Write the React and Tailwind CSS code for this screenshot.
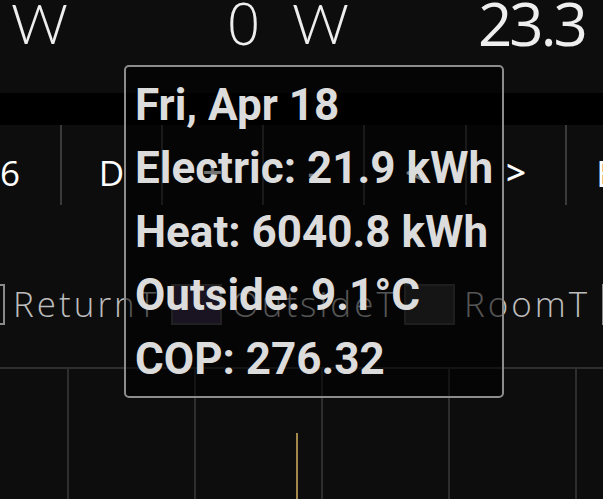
import React from 'react';

const buttons = [
    { label: '+', width: 'w-[101px]' },
    { label: '-', width: 'w-[101px]' },
    { label: '<', width: 'w-[102px]' },
    { label: '>', width: 'w-[100px]' },
];

const tooltipLines = [
    'Fri, Apr 18',
    'Electric: 21.9 kWh',
    'Heat: 6040.8 kWh',
    'Outside: 9.1°C',
    'COP: 276.32',
];

function LegendBox({ className }) {
    return <div className={`w-[51px] h-[41px] shrink-0 border-2 ${className}`} />;
}

export default function App() {
    return (
        <div className="relative w-[603px] h-[499px] overflow-hidden bg-[#0d0d0d] text-white" style={{ fontFamily: '"Open Sans", Lato, sans-serif' }}>
            {/* Summary values */}
            <div className="h-[93px] flex items-start text-[56px] leading-[46px] text-[#eeeeee] whitespace-nowrap">
                <span className="ml-[11px] font-light" style={{ fontFamily: 'Lato, sans-serif' }}>W</span>
                <span className="ml-[159px] font-light text-[58px]">0</span>
                <span className="ml-[32px] font-light" style={{ fontFamily: 'Lato, sans-serif' }}>W</span>
                <span className="ml-[129px] font-normal tracking-[-3px] text-[60px]">23.3</span>
            </div>

            {/* Separator band */}
            <div className="h-[32px] bg-black" />

            {/* Controls */}
            <div className="h-[80px] flex text-[35px] leading-none whitespace-nowrap">
                <div className="w-[60px] shrink-0 flex items-center pt-[14px]">6</div>
                <div className="w-[101px] shrink-0 border-l-2 border-[#3a3a3a] flex items-center justify-center pt-[14px]">D</div>
                {buttons.map((b) => (
                    <div key={b.label} className={`${b.width} shrink-0 border-l-2 border-[#3a3a3a] flex items-center justify-center pt-[12px] font-semibold`}>
                        {b.label}
                    </div>
                ))}
                <div className="w-[101px] shrink-0 border-l-2 border-[#3a3a3a] flex items-center pl-[29px] pt-[14px] text-[37px]">E</div>
            </div>

            {/* Legend */}
            <div className="mt-[79px] h-[41px] flex items-center -ml-[46px] text-[35px] font-light tracking-[3px] text-[#bdbdbd] whitespace-nowrap">
                <LegendBox className="border-[#8a8a8a] bg-transparent" />
                <span className="ml-[8px] w-[150px] shrink-0">ReturnT</span>
                <LegendBox className="ml-[8px] border-[#4a4a4a] bg-[#3b2c4a]" />
                <span className="ml-[10px] w-[162px] shrink-0">OutsideT</span>
                <LegendBox className="ml-[10px] border-[#444] bg-[#303030]" />
                <span className="ml-[9px] w-[130px] shrink-0">RoomT</span>
                <LegendBox className="ml-[8px] border-[#8a8a8a] bg-transparent" />
            </div>

            {/* Chart */}
            <svg className="block mt-[42px]" width="603" height="132" viewBox="0 0 603 132">
                <line x1="0" y1="1" x2="603" y2="1" stroke="#2e2e2e" strokeWidth="2" />
                {[68, 195, 322, 449, 576].map((x) => (
                    <line key={x} x1={x} y1="0" x2={x} y2="132" stroke="#2e2e2e" strokeWidth="2" />
                ))}
                <line x1="297" y1="66" x2="297" y2="132" stroke="#d6b25e" strokeWidth="1.5" />
            </svg>

            {/* Tooltip */}
            <div className="absolute left-[124px] top-[65px] w-[380px] h-[333px] rounded-[5px] border-2 border-[#8c8c8c] bg-black/55 pl-[9px] pt-[6px]" style={{ fontFamily: 'Roboto, "Liberation Sans", sans-serif' }}>
                {tooltipLines.map((line) => (
                    <div key={line} className="h-[63.5px] flex items-center text-[44px] font-bold text-[#dcdcdc] whitespace-nowrap">
                        {line}
                    </div>
                ))}
            </div>
        </div>
    );
}
